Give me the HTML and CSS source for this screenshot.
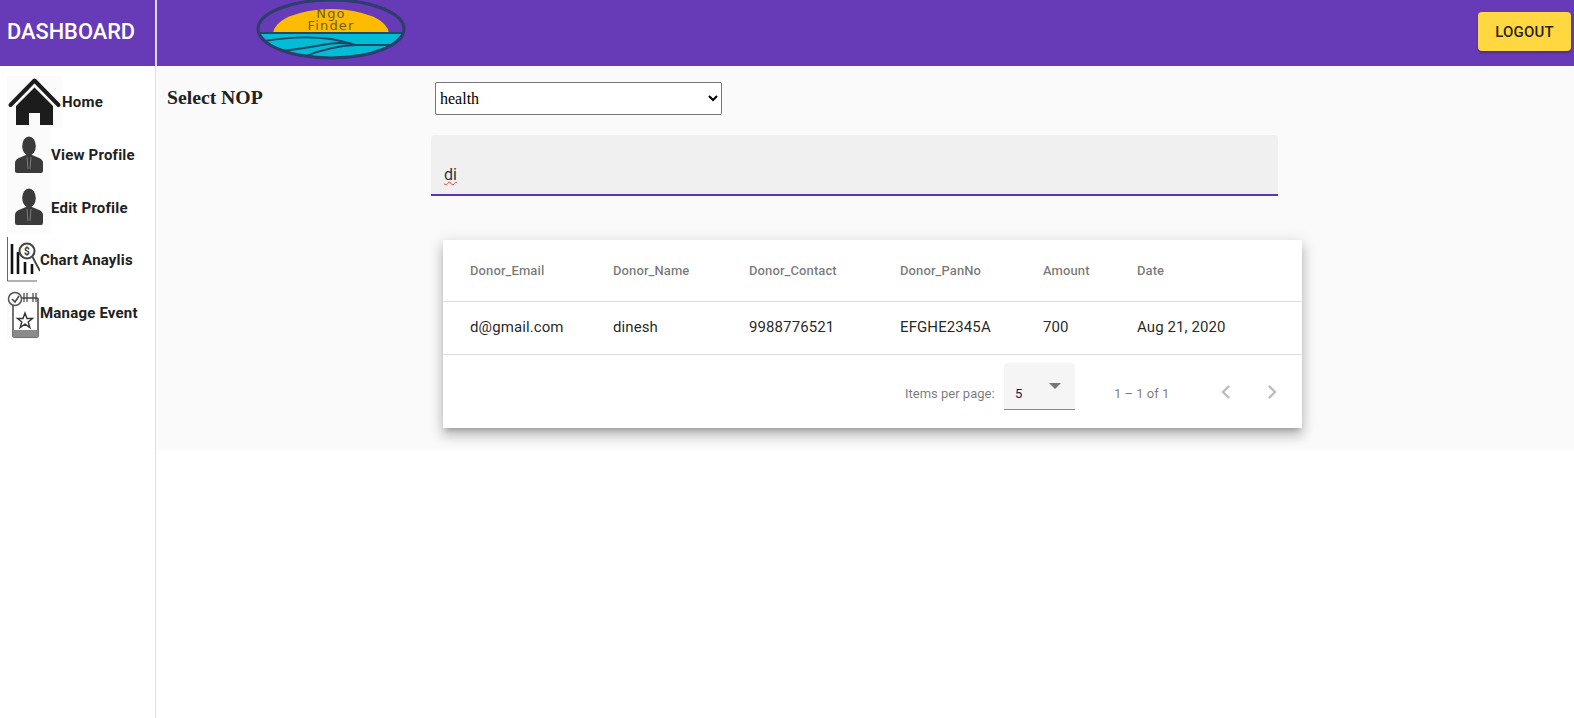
FILE: index.html
```html
<!DOCTYPE html>
<html lang="en">
<head>
  <meta charset="UTF-8">
  <title>Dashboard</title>
  <link rel="stylesheet" href="styles.css">
</head>
<body>
  <div class="layout">
    <aside class="sidebar">
      <div class="brand">DASHBOARD</div>
      <nav class="menu">
        <a class="menu-item">
          <svg class="icon-home" viewBox="0 0 55 53">
            <rect y="1" width="55" height="52" fill="#fbfbfb"/>
            <path d="M3.5 30 L27.5 5.5 L51.5 30" fill="none" stroke="#1c1c1c" stroke-width="4" stroke-linecap="round" stroke-linejoin="round"/>
            <path d="M9 31 L27.5 12.5 L46 31 V50 H33 V38 H22 V50 H9 Z" fill="#1c1c1c"/>
          </svg>
          <span>Home</span>
        </a>
        <a class="menu-item">
          <svg class="icon-user" viewBox="0 0 44 53">
            <rect width="44" height="53" fill="#fbfbfb"/>
            <path d="M8 43 V35 Q8 31 13 29.5 L19 27 H25 L31 29.5 Q36 31 36 35 V43 Q36 45 34 45 H10 Q8 45 8 43 Z" fill="#3a3a3a"/>
            <path d="M20 29 L21 41 M24 29 L23 41" stroke="#9a9a9a" stroke-width="0.7"/>
            <ellipse cx="22" cy="18" rx="6.8" ry="9.5" fill="#3a3a3a"/>
          </svg>
          <span>View Profile</span>
        </a>
        <a class="menu-item">
          <svg class="icon-user" viewBox="0 0 44 53">
            <rect width="44" height="53" fill="#fbfbfb"/>
            <path d="M8 43 V35 Q8 31 13 29.5 L19 27 H25 L31 29.5 Q36 31 36 35 V43 Q36 45 34 45 H10 Q8 45 8 43 Z" fill="#3a3a3a"/>
            <path d="M20 29 L21 41 M24 29 L23 41" stroke="#9a9a9a" stroke-width="0.7"/>
            <ellipse cx="22" cy="18" rx="6.8" ry="9.5" fill="#3a3a3a"/>
          </svg>
          <span>Edit Profile</span>
        </a>
        <a class="menu-item">
          <svg class="icon-small" viewBox="0 0 33 53">
            <path d="M0.5 4 V48 H30" fill="none" stroke="#666" stroke-width="1"/>
            <path d="M5 11 V41 M11 19 V41 M18 29 V41 M25 31 V41" stroke="#111" stroke-width="2.6"/>
            <circle cx="20" cy="18" r="7.5" fill="#fff" stroke="#444" stroke-width="2"/>
            <path d="M25.5 24 L33 38" stroke="#444" stroke-width="1.8"/>
            <text class="icon-dollar" x="20" y="22">$</text>
          </svg>
          <span>Chart Anaylis</span>
        </a>
        <a class="menu-item">
          <svg class="icon-small" viewBox="0 0 33 53">
            <rect y="2" width="33" height="51" fill="#fbfbfb"/>
            <rect x="6" y="12" width="25" height="39" rx="1" fill="#fff" stroke="#444" stroke-width="1.5"/>
            <path d="M6 44 H31 V51 H6 Z" fill="#8a8a8a"/>
            <path d="M17 7 V16 M20 7 V16 M26 7 V16 M29 7 V16" stroke="#444" stroke-width="1.2"/>
            <circle cx="8" cy="13" r="6.5" fill="#fff" stroke="#555" stroke-width="1.5"/>
            <path d="M5 13 L8 16 L12 10" fill="none" stroke="#444" stroke-width="1.5"/>
            <path d="M18 27 L20 32.5 H25.5 L21.2 36 L22.8 41.5 L18 38.2 L13.2 41.5 L14.8 36 L10.5 32.5 H16 Z" fill="none" stroke="#333" stroke-width="1.4"/>
          </svg>
          <span>Manage Event</span>
        </a>
      </nav>
    </aside>

    <div class="right">
      <header class="topbar">
        <svg class="logo" viewBox="0 0 150 62">
          <defs>
            <clipPath id="sun"><rect x="0" y="0" width="150" height="35"/></clipPath>
          </defs>
          <ellipse cx="75" cy="31" rx="73" ry="29" fill="#673ab7"/>
          <ellipse cx="75" cy="36" rx="58" ry="25" fill="#ffbb00" clip-path="url(#sun)"/>
          <path d="M4 35 H146 Q128 60 75 60 Q22 60 4 35 Z" fill="#00bcd4"/>
          <path d="M4 35 H146 M9 43 Q45 37 75 41 Q90 44 100 47 H136 M26 53 Q50 50 66 47 Q85 43 100 47 M50 58 Q75 48 100 47" fill="none" stroke="#1d4a68" stroke-width="1.8"/>
          <ellipse cx="75" cy="31" rx="73" ry="29" fill="none" stroke="#2c3e6b" stroke-width="3"/>
          <text class="logo-text" x="75" y="20">Ngo</text>
          <text class="logo-text" x="75" y="32">Finder</text>
        </svg>
        <button class="logout" type="button">LOGOUT</button>
      </header>

      <main class="content">
        <div class="nop-row">
          <label class="nop-label">Select NOP</label>
          <select class="nop-select">
            <option>health</option>
          </select>
        </div>

        <div class="filter"><span class="typed">di</span></div>

        <section class="card">
          <table class="donors">
            <thead>
              <tr>
                <th class="col-email">Donor_Email</th>
                <th class="col-name">Donor_Name</th>
                <th class="col-contact">Donor_Contact</th>
                <th class="col-pan">Donor_PanNo</th>
                <th class="col-amount">Amount</th>
                <th>Date</th>
              </tr>
            </thead>
            <tbody>
              <tr>
                <td>d@gmail.com</td>
                <td>dinesh</td>
                <td>9988776521</td>
                <td>EFGHE2345A</td>
                <td>700</td>
                <td>Aug 21, 2020</td>
              </tr>
            </tbody>
          </table>
          <div class="pager">
            <span class="pager-label">Items per page:</span>
            <div class="page-size">
              <span>5</span>
              <i class="caret"></i>
            </div>
            <span class="pager-range">1 – 1 of 1</span>
            <svg class="chev chev-prev" viewBox="0 0 24 24"><path d="M15.41 7.41 14 6l-6 6 6 6 1.41-1.41L10.83 12z"/></svg>
            <svg class="chev" viewBox="0 0 24 24"><path d="M10 6 8.59 7.41 13.17 12l-4.58 4.59L10 18l6-6z"/></svg>
          </div>
        </section>
      </main>
    </div>
  </div>
</body>
</html>
```

FILE: styles.css
```css
html, body {
  height: 100%;
}
body {
  margin: 0;
  background-color: #fff;
  font-family: Roboto, sans-serif;
  color: rgba(0, 0, 0, 0.87);
  overflow: hidden;
}
.layout {
  display: flex;
  height: 718px;
}

/* left column */
.sidebar {
  width: 155px;
  flex-shrink: 0;
  border-right: 1px solid #e0e0e0;
}
.brand {
  height: 66px;
  padding-left: 7px;
  background-color: #673ab7;
  color: #fff;
  font-size: 21.8px;
  font-weight: 500;
  line-height: 63px;
}
.menu {
  display: flex;
  flex-direction: column;
  padding: 9px 0 0 7px;
}
.menu-item {
  display: flex;
  align-items: center;
  height: 52.7px;
  font-size: 15px;
  font-weight: 700;
  letter-spacing: 0.2px;
  color: #212121;
}
.menu-item span {
  padding-top: 2px;
}
.icon-home {
  width: 55px;
  height: 53px;
}
.icon-user {
  width: 44px;
  height: 53px;
}
.icon-small {
  width: 33px;
  height: 53px;
}
.icon-dollar {
  font-size: 10px;
  text-anchor: middle;
  fill: #333;
}

/* top bar */
.right {
  flex: 1;
  min-width: 0;
}
.topbar {
  display: flex;
  align-items: center;
  justify-content: space-between;
  height: 66px;
  padding: 0 3px 0 99px;
  background-color: #673ab7;
  border-left: 1px solid #e0d8f0;
  box-sizing: border-box;
  overflow: hidden;
}
.logo {
  width: 150px;
  height: 62px;
  margin-top: -8px;
}
.logo-text {
  font-family: "DejaVu Sans", sans-serif;
  font-size: 13px;
  letter-spacing: 1.2px;
  text-anchor: middle;
  fill: #6e5f24;
}
.logout {
  width: 93px;
  height: 39px;
  margin-top: -3px;
  border: 0;
  border-radius: 4px;
  background-color: #ffd740;
  color: rgba(0, 0, 0, 0.87);
  font-family: Roboto, sans-serif;
  font-size: 15px;
  font-weight: 500;
  letter-spacing: 0.2px;
  box-shadow: 0 2px 2px rgba(0, 0, 0, 0.25);
}

/* main area */
.content {
  height: 384px;
  padding: 16px 0 0 11px;
  background-color: #fafafa;
  box-sizing: border-box;
}
.nop-row {
  display: flex;
  align-items: flex-start;
}
.nop-label {
  width: 268px;
  padding-top: 4px;
  font-family: "Liberation Serif", serif;
  font-size: 19.7px;
  font-weight: 700;
  color: #212121;
}
.nop-select {
  width: 287px;
  height: 33px;
  background-color: #fff;
  border: 1px solid #767676;
  border-radius: 2px;
  font-family: "Liberation Serif", serif;
  font-size: 16px;
  color: #000;
}
.filter {
  width: 847px;
  height: 61px;
  margin: 20px 0 0 264px;
  padding: 28px 13px 0;
  background-color: #f0f0f0;
  border-bottom: 2px solid #5e35b1;
  border-radius: 4px 4px 0 0;
  box-sizing: border-box;
  font-size: 16px;
  line-height: 24px;
  color: #333;
}
.typed {
  text-decoration: underline wavy #e53935 1px;
  text-underline-offset: 1px;
}
.card {
  width: 859px;
  height: 188px;
  margin: 44px 0 0 276px;
  background-color: #fff;
  box-shadow: 0 5px 5px -3px rgba(0, 0, 0, 0.2), 0 8px 10px 1px rgba(0, 0, 0, 0.14), 0 3px 14px 2px rgba(0, 0, 0, 0.12);
}

/* table */
.donors {
  width: 100%;
  border-collapse: collapse;
  table-layout: fixed;
}
.donors th, .donors td {
  padding: 0;
  text-align: left;
  border-bottom: 1px solid #e0e0e0;
}
.donors th {
  height: 61px;
  font-size: 13px;
  font-weight: 500;
  letter-spacing: 0.1px;
  color: rgba(0, 0, 0, 0.54);
}
.donors td {
  height: 50px;
  padding-bottom: 2px;
  font-size: 15px;
  font-weight: 400;
  letter-spacing: 0.1px;
}
.donors th:first-child, .donors td:first-child {
  padding-left: 27px;
}
.col-email {
  width: 143px;
}
.col-name {
  width: 136px;
}
.col-contact {
  width: 151px;
}
.col-pan {
  width: 143px;
}
.col-amount {
  width: 94px;
}

/* paginator */
.pager {
  display: flex;
  align-items: center;
  height: 73px;
  padding: 4px 0 0 462px;
  box-sizing: border-box;
  font-size: 13px;
  color: rgba(0, 0, 0, 0.54);
}
.pager > * {
  flex: none;
}
.pager-label {
  width: 99px;
}
.page-size {
  position: relative;
  width: 71px;
  height: 47px;
  margin-bottom: 14px;
  padding: 23px 0 0 11px;
  background-color: #f5f5f5;
  border-bottom: 1px solid #8a8a8a;
  border-radius: 4px 4px 0 0;
  box-sizing: border-box;
  color: #1a1a4a;
}
.caret {
  position: absolute;
  top: 20px;
  left: 45px;
  border-left: 6px solid transparent;
  border-right: 6px solid transparent;
  border-top: 6px solid #757575;
}
.pager-range {
  width: 95px;
  margin-left: 39px;
}
.chev {
  width: 28px;
  height: 28px;
  margin: 0 18px 4px 0;
  fill: rgba(0, 0, 0, 0.26);
}
.chev-prev {
  margin-left: 3px;
}
```
